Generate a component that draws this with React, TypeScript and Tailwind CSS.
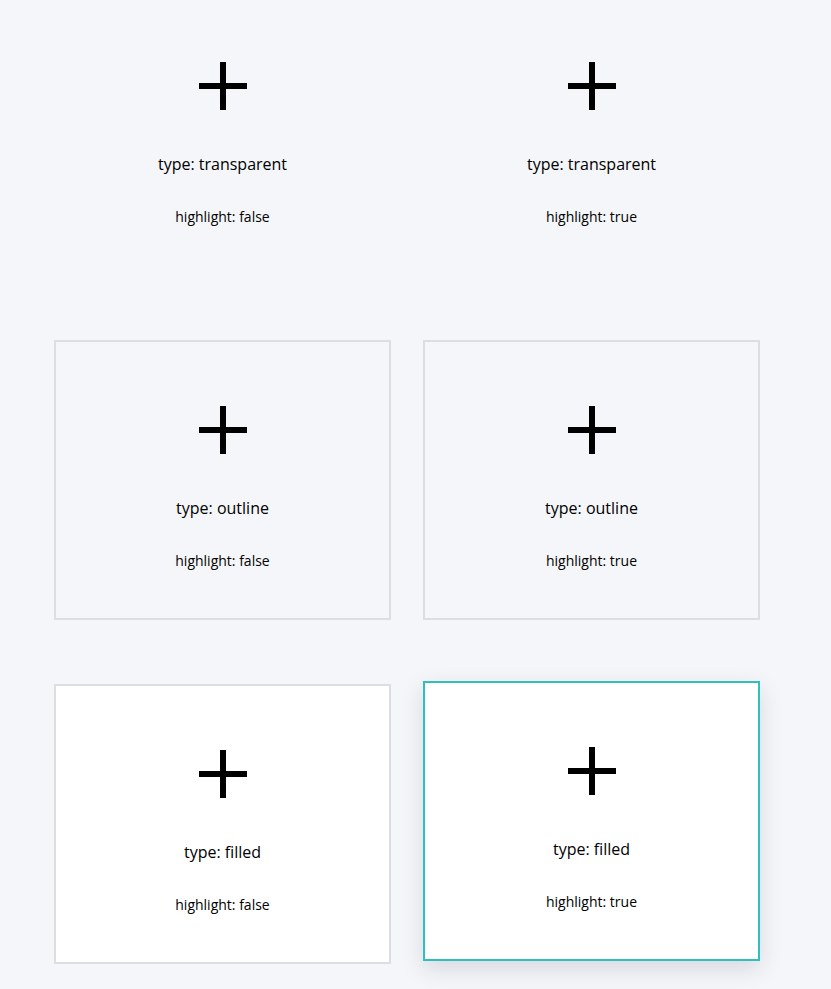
import React from 'react'

type CardType = 'transparent' | 'outline' | 'filled'

function PlusIcon() {
  return (
    <svg width="48" height="48" viewBox="0 0 48 48" className="block">
      <rect x="0" y="21" width="48" height="6" fill="#000" />
      <rect x="21" y="0" width="6" height="48" fill="#000" />
    </svg>
  )
}

function AddCard({ type, highlight }: { type: CardType; highlight: boolean }) {
  const base = 'flex h-[280px] w-[337px] flex-col items-center border-2 pt-[64px]'
  let look = 'border-transparent'
  if (type === 'outline') look = 'border-[#dcdee3]'
  if (type === 'filled') look = highlight
    ? 'border-[#30bfbf] bg-white -translate-y-[3px] shadow-[0_8px_22px_rgba(20,30,60,0.13)]'
    : 'border-[#dcdee3] bg-white'

  return (
    <div className={`${base} ${look}`}>
      <PlusIcon />
      <div className="mt-[42px] text-[16px] leading-6 text-black">type: {type}</div>
      <div className="mt-[31px] text-[14px] leading-5 text-black">highlight: {highlight ? 'true' : 'false'}</div>
    </div>
  )
}

export default function App() {
  const rows: CardType[] = ['transparent', 'outline', 'filled']
  return (
    <div
      className="min-h-[989px] w-full overflow-hidden bg-[#f5f6f9]"
      style={{ fontFamily: '"Open Sans", "Noto Sans", sans-serif' }}
    >
      <div className="-mt-[4px] grid grid-cols-[337px_337px] gap-x-8 gap-y-16 pl-[54px]">
        {rows.map((t) => (
          <React.Fragment key={t}>
            <AddCard type={t} highlight={false} />
            <AddCard type={t} highlight={true} />
          </React.Fragment>
        ))}
      </div>
    </div>
  )
}
